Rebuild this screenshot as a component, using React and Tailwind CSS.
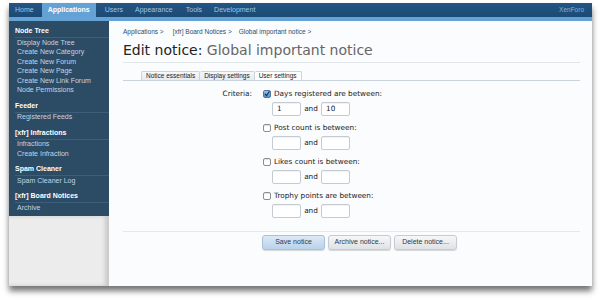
import React from "react";

const groups = [
  { h: "Node Tree", items: ["Display Node Tree", "Create New Category", "Create New Forum", "Create New Page", "Create New Link Forum", "Node Permissions"] },
  { h: "Feeder", items: ["Registered Feeds"] },
  { h: "[xfr] Infractions", items: ["Infractions", "Create Infraction"] },
  { h: "Spam Cleaner", items: ["Spam Cleaner Log"] },
  { h: "[xfr] Board Notices", items: ["Archive"] },
];

function Check({ checked }) {
  if (checked) {
    return (
      <span className="w-[8px] h-[8px] rounded-[2px] border border-[#4a78a8] bg-gradient-to-b from-[#9cc3ea] to-[#4f8ccb] flex items-center justify-center shrink-0">
        <svg width="8" height="8" viewBox="0 0 8 8" className="-mt-[1px]">
          <path d="M1.5 4.2 L3.3 6.2 L7 0.8" fill="none" stroke="#1b2f4a" strokeWidth="1.4" strokeLinecap="round" strokeLinejoin="round" />
        </svg>
      </span>
    );
  }
  return <span className="w-[8px] h-[8px] rounded-[2px] border border-[#8e8e8e] bg-white shrink-0 shadow-[inset_0_1px_1px_rgba(0,0,0,0.12)]" />;
}

function Input({ v }) {
  return (
    <div className="w-[29px] h-[14px] border border-[#c5cbd3] rounded-[2px] bg-white px-[4px] flex items-center text-[7.3px] text-[#222] shadow-[inset_0_1px_1px_rgba(0,0,0,0.06)]">
      {v}
    </div>
  );
}

function Crit({ label, checked, a = "", b = "" }) {
  return (
    <div className="h-[34px] flex flex-col">
      <div className="h-[12px] flex items-center gap-[2px]">
        <Check checked={checked} />
        <span className="ml-[1px]">{label}</span>
      </div>
      <div className="mt-[2px] flex items-center gap-[3px] ml-[9px]">
        <Input v={a} />
        <span className="w-[14px] text-center">and</span>
        <Input v={b} />
      </div>
    </div>
  );
}

const lib = "font-['Liberation_Sans',Arial,sans-serif]";
const dv = "font-['DejaVu_Sans',Verdana,sans-serif]";

export default function App() {
  return (
    <div className="w-[600px] h-[300px] bg-white overflow-hidden">
      <div className="ml-[9px] mt-[3px] w-[583px] h-[283px] flex flex-col bg-[#fbfcfe] shadow-[0_5px_6px_rgba(0,0,0,0.55)]">
        <nav className={`${lib} h-[14px] bg-gradient-to-b from-[#245583] to-[#1b4a74] flex items-stretch text-[7px] text-[#9fc4e6]`}>
          <span className="px-[6px] flex items-center">Home</span>
          <span className="ml-[2px] px-[6px] flex items-center bg-[#64a1d4] text-white font-bold">Applications</span>
          <span className="ml-[3px] px-[6px] flex items-center">Users</span>
          <span className="px-[6px] flex items-center">Appearance</span>
          <span className="ml-[1px] px-[6px] flex items-center">Tools</span>
          <span className="px-[6px] flex items-center">Development</span>
          <span className="ml-auto pr-[8px] flex items-center text-[6.5px] text-[#7fb3e0]">XenForo</span>
        </nav>
        <div className="h-[4px] bg-[#65a2d5]" />
        <div className="flex flex-1 min-h-0">
          <aside className={`${lib} w-[100px] flex flex-col`}>
            <div className="bg-[#2c4b65] pt-[5px] pb-[3px] flex flex-col gap-[5.5px]">
              {groups.map((g) => (
                <div key={g.h} className="flex flex-col">
                  <div className="h-[12px] ml-[6px] flex items-center border-b border-[#3e5f7b] text-[7px] font-bold text-white">{g.h}</div>
                  {g.items.map((it) => (
                    <div key={it} className="h-[9.5px] pl-[8px] flex items-center text-[7px] text-[#c4d5e4]">{it}</div>
                  ))}
                </div>
              ))}
            </div>
            <div className="flex-1 bg-[#ececec] shadow-[inset_-4px_0_4px_rgba(0,0,0,0.15)]" />
          </aside>
          <main className="flex-1 pl-[14px] pr-[12px] pt-[6px] flex flex-col">
            <div className={`${lib} h-[10px] flex items-center text-[6.5px] text-[#2d4d6e]`}>
              <span>Applications &gt;</span>
              <span className="ml-[9px]">[xfr] Board Notices &gt;</span>
              <span className="ml-[7px]">Global important notice &gt;</span>
            </div>
            <h1 className={`${dv} mt-[5px] h-[16px] leading-[16px] text-[14px] text-[#222] whitespace-nowrap`}>
              Edit notice: <span className="text-[#666]">Global important notice</span>
            </h1>
            <div className="mt-[4px] border-t border-[#e1e6eb]" />
            <div className={`${lib} mt-[8px] pl-[18px] flex items-end border-b border-[#c9d3dd] text-[6.5px] text-[#222]`}>
              <span className="h-[9px] px-[4px] flex items-center border border-b-0 border-[#c9d3dd] rounded-t-[2px] bg-gradient-to-b from-[#f6f8fa] to-[#e6ebf0]">Notice essentials</span>
              <span className="h-[9px] px-[4px] flex items-center border border-b-0 border-l-0 border-[#c9d3dd] rounded-t-[2px] bg-gradient-to-b from-[#f6f8fa] to-[#e6ebf0]">Display settings</span>
              <span className="h-[9px] px-[4px] flex items-center border border-b-0 border-l-0 border-[#c9d3dd] rounded-t-[2px] bg-white">User settings</span>
            </div>
            <div className={`${dv} mt-[7px] flex text-[7.3px] text-[#222]`}>
              <div className="w-[129px] h-[12px] flex items-center justify-end">Criteria:</div>
              <div className="ml-[11px] flex flex-col">
                <Crit label="Days registered are between:" checked a="1" b="10" />
                <Crit label="Post count is between:" />
                <Crit label="Likes count is between:" />
                <Crit label="Trophy points are between:" />
              </div>
            </div>
            <div className="mt-[7px] border-t border-[#e1e8ee]" />
            <div className={`${lib} mt-[3px] pl-[139px] flex gap-[3px] text-[7px] text-[#2a3a4c]`}>
              <button className="w-[63px] h-[15px] rounded-[3px] border border-[#a9c0d8] bg-gradient-to-b from-[#dde9f5] to-[#b9d2ea] shadow-[0_1px_1px_rgba(0,0,0,0.15)]">Save notice</button>
              <button className="w-[63px] h-[15px] rounded-[3px] border border-[#c6cbd1] bg-gradient-to-b from-[#f6f7f8] to-[#dfe2e6] shadow-[0_1px_1px_rgba(0,0,0,0.15)]">Archive notice...</button>
              <button className="w-[63px] h-[15px] rounded-[3px] border border-[#c6cbd1] bg-gradient-to-b from-[#f6f7f8] to-[#dfe2e6] shadow-[0_1px_1px_rgba(0,0,0,0.15)]">Delete notice...</button>
            </div>
          </main>
        </div>
      </div>
    </div>
  );
}
